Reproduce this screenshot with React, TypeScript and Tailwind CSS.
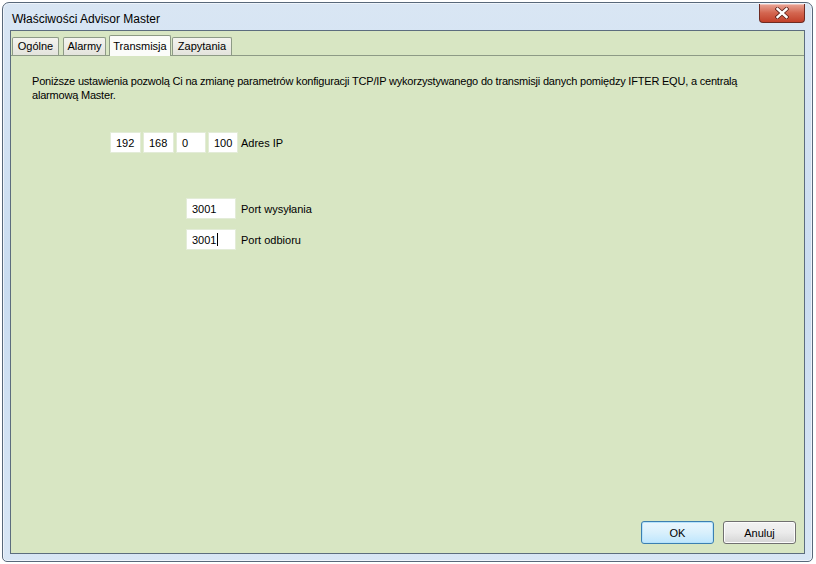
const sans = "font-['Liberation_Sans',Arial,sans-serif]"

function Tab({ label, w, active }: { label: string; w: string; active?: boolean }) {
  if (active) {
    return (
      <div className={`relative z-10 -mb-px flex h-[21px] items-center justify-center rounded-t-[2px] border border-b-0 border-[#8d9a86] bg-[#fbfcf9] text-[11px] text-black ${w}`}>
        {label}
      </div>
    )
  }
  return (
    <div className={`mt-[2px] flex h-[18px] items-center justify-center rounded-t-[2px] border border-b-0 border-[#8d9a86] bg-gradient-to-b from-[#f4f4ef] to-[#e3e3dc] text-[11px] text-black ${w}`}>
      {label}
    </div>
  )
}

function Field({ value, w, caret }: { value: string; w: string; caret?: boolean }) {
  return (
    <div className={`flex h-[21px] items-center border border-[#e3ecd8] bg-white pl-[5px] text-[11px] text-black ${w}`}>
      {value}
      {caret && <span className="ml-px inline-block h-[13px] w-px bg-black" />}
    </div>
  )
}

function DlgButton({ label, focused }: { label: string; focused?: boolean }) {
  return (
    <button
      type="button"
      className={`flex h-[23px] w-[73px] items-center justify-center rounded-[3px] border text-[11px] text-black ${
        focused
          ? 'border-[#3c7fb1] bg-gradient-to-b from-[#eaf6fd] via-[#d9f0fc] to-[#bee6fd] shadow-[inset_0_0_0_1px_#b6e3fb]'
          : 'border-[#707070] bg-gradient-to-b from-[#f2f2f2] via-[#ebebeb] to-[#d5d5d5] shadow-[inset_0_0_0_1px_#fcfcfc]'
      }`}
    >
      {label}
    </button>
  )
}

export default function App() {
  return (
    <div className={`h-[564px] w-[816px] bg-white pl-[2px] pt-[2px] ${sans}`}>
      <div className="flex h-[560px] w-[811px] flex-col rounded-t-[7px] rounded-b-[5px] border border-[#58687a] bg-gradient-to-b from-[#d9e6f4] via-[#c9dcf0] to-[#d8e6f5] shadow-[inset_0_0_0_1px_#eef4fb]">
        <div className="flex h-[27px] items-start justify-between pl-[9px] pr-[7px]">
          <span className="pt-[10px] text-[12px] leading-none text-black">Właściwości Advisor Master</span>
          <div className="mt-[1px] flex h-[19px] w-[46px] items-center justify-center rounded-b-[4px] border border-t-0 border-[#6e2b22] bg-gradient-to-b from-[#e9a597] via-[#d3654f] to-[#c2402a] shadow-[inset_0_1px_0_#f3c4ba]">
            <svg width="14" height="12" viewBox="0 0 14 12">
              <path d="M2.5 2 L11.5 10 M11.5 2 L2.5 10" stroke="#5a2018" strokeWidth="4" strokeLinecap="square" />
              <path d="M2.5 2 L11.5 10 M11.5 2 L2.5 10" stroke="#ffffff" strokeWidth="2.4" strokeLinecap="square" />
            </svg>
          </div>
        </div>

        <div className="mx-[7px] mb-[7px] flex flex-1 flex-col border border-[#5c6d7e] bg-[#d8e6c3]">
          <div className="flex items-end pl-[1px] pt-[4px]">
            <Tab label="Ogólne" w="w-[47px]" />
            <div className="ml-[4px]">
              <Tab label="Alarmy" w="w-[43px]" />
            </div>
            <div className="ml-[3px] flex items-end">
              <Tab label="Transmisja" w="w-[62px]" active />
            </div>
            <div className="ml-[1px]">
              <Tab label="Zapytania" w="w-[60px]" />
            </div>
          </div>

          <div className="flex flex-1 flex-col border-t border-[#8d9a86] pl-[21px] pt-[18px] text-[11px] leading-[14px] text-black">
            <p className="max-w-[720px] tracking-[-0.2px]">
              Poniższe ustawienia pozwolą Ci na zmianę parametrów konfiguracji TCP/IP wykorzystywanego do transmisji danych pomiędzy IFTER EQU, a centralą alarmową Master.
            </p>

            <div className="mt-[30px] flex items-center gap-[2px] pl-[78px]">
              <Field value="192" w="w-[31px]" />
              <Field value="168" w="w-[31px]" />
              <Field value="0" w="w-[30px]" />
              <Field value="100" w="w-[30px]" />
              <span className="ml-[1px]">Adres IP</span>
            </div>

            <div className="mt-[45px] flex flex-col gap-[10px] pl-[154px]">
              <div className="flex items-center gap-[5px]">
                <Field value="3001" w="w-[50px]" />
                <span>Port wysyłania</span>
              </div>
              <div className="flex items-center gap-[5px]">
                <Field value="3001" w="w-[50px]" caret />
                <span>Port odbioru</span>
              </div>
            </div>

            <div className="mt-auto mb-[9px] flex justify-end gap-[9px] pr-[8px]">
              <DlgButton label="OK" focused />
              <DlgButton label="Anuluj" />
            </div>
          </div>
        </div>
      </div>
    </div>
  )
}
